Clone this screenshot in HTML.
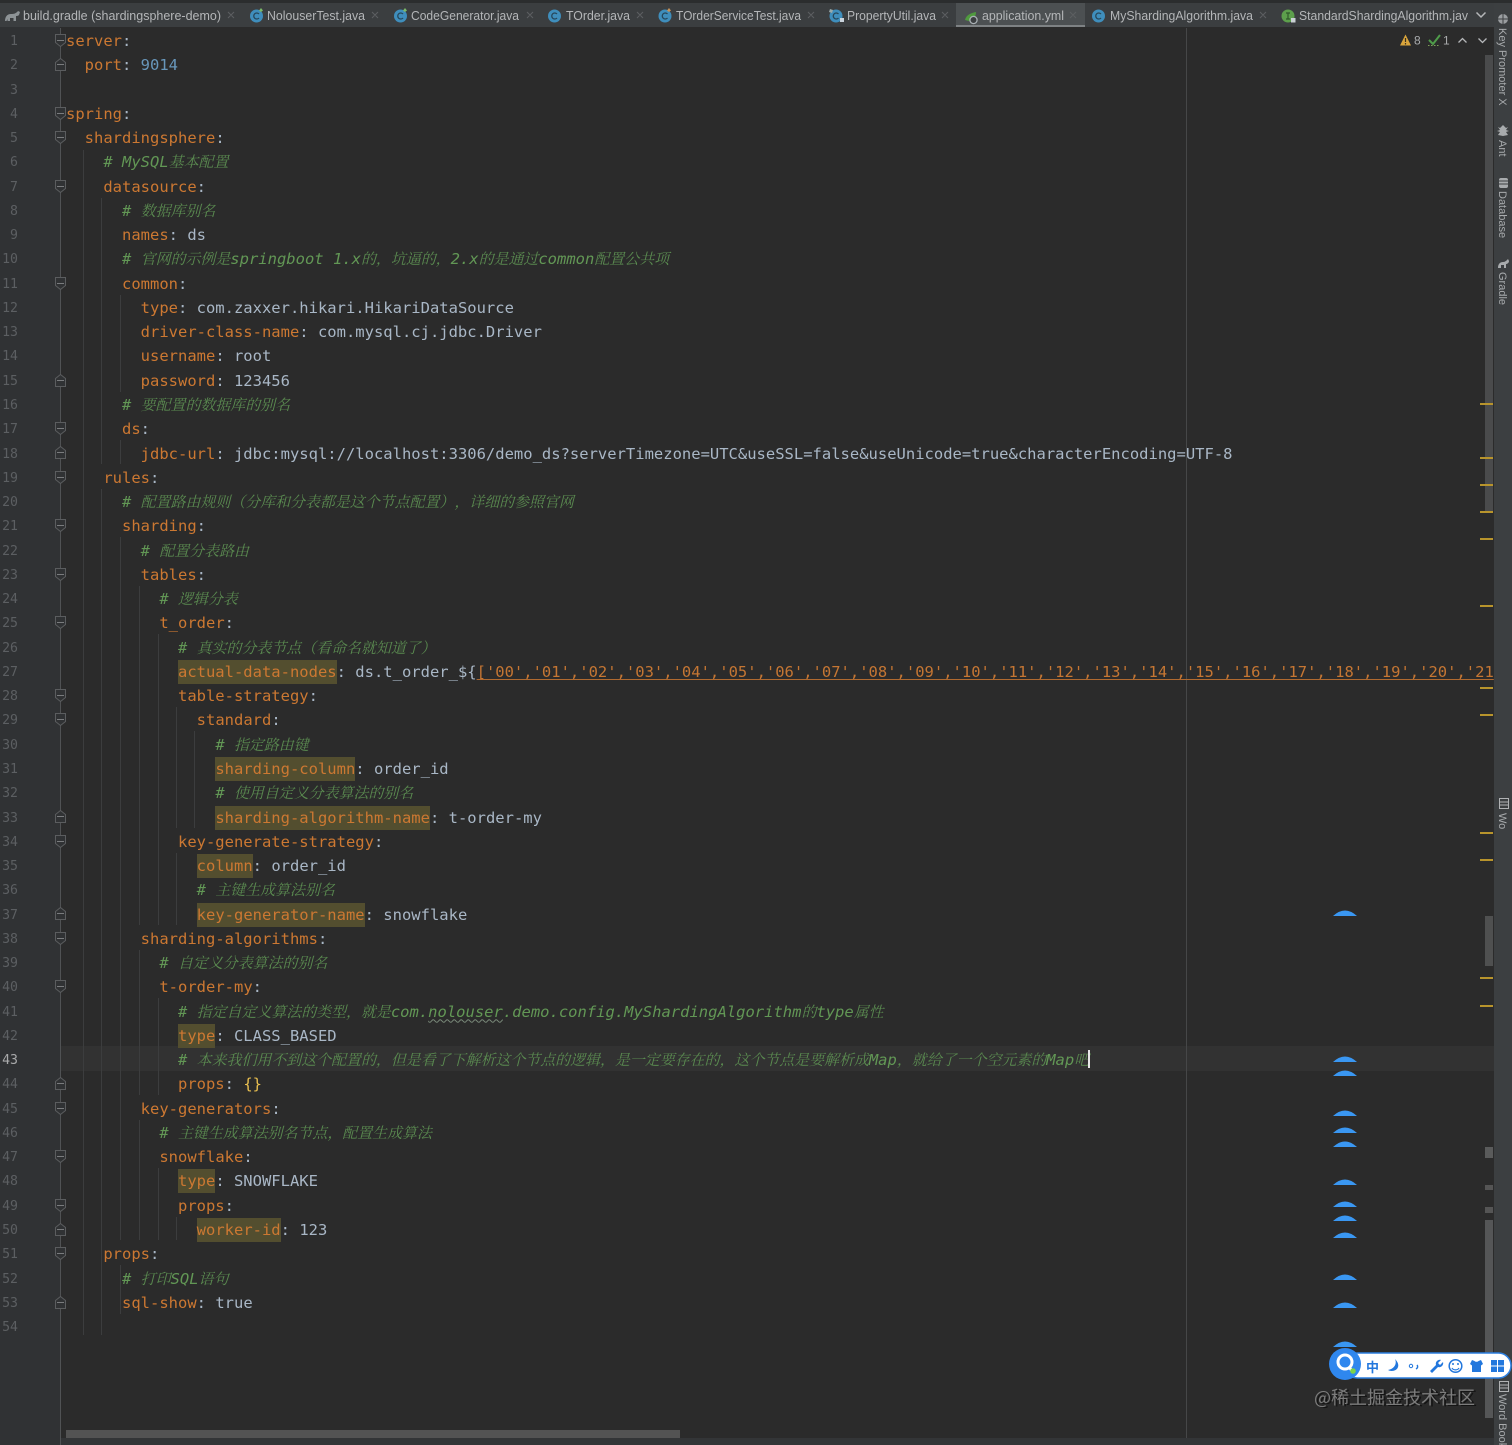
<!DOCTYPE html>
<html lang="zh"><head><meta charset="utf-8"><title>application.yml</title>
<style>
html,body{margin:0;padding:0;background:#2b2b2b;width:1512px;height:1445px;overflow:hidden}
.a{position:absolute}
#code{position:absolute;left:66px;top:29px;width:1428px;height:1400px;overflow:hidden;font:15.5px/24.27px "DejaVu Sans Mono","Liberation Mono","Noto Serif CJK SC",monospace;color:#a9b7c6;text-spacing-trim:space-all}
#code div{height:24.27px;white-space:pre}
#nums{position:absolute;left:0;top:30px;width:18px;text-align:right;font:13.2px/24.27px "DejaVu Sans Mono","Liberation Mono",monospace;color:#5c5f62}
#nums div{height:24.27px}
.k{color:#cc7832}
.h{color:#cc7832;background:#534e2f;display:inline-block;height:24px;line-height:24px;vertical-align:top}
.n{color:#6897bb}
.c{color:#629755;font-style:italic}
.c i{font:italic 14.95px/24px "Noto Serif CJK SC","Noto Sans CJK SC",serif;color:#5a8a50}
.s{color:#c57633;text-decoration:underline;text-decoration-color:#b06a30;text-underline-offset:2px;text-decoration-skip-ink:none}
.w{text-decoration:underline wavy #7a8a7a 1px;text-underline-offset:2px;text-decoration-skip-ink:none}
.y{color:#e8bf50}
.tool{position:absolute;left:1495px;width:13px;writing-mode:vertical-rl;font:11px/13px "Liberation Sans",sans-serif;color:#a8abad;white-space:nowrap;overflow:hidden}
</style></head><body>
<div class="a" style="left:0;top:0;width:1512px;height:3px;background:#2b2d2e"></div>
<div class="a" style="left:0;top:3px;width:1494px;height:24px;background:#3b3e40"></div>
<div class="a" style="left:956px;top:3px;width:129px;height:24px;background:#4c5052"></div>
<div class="a" style="left:956px;top:25px;width:129px;height:2px;background:#7e8284"></div>
<div class="a" style="left:0;top:27px;width:60px;height:1418px;background:#303234"></div>
<div class="a" style="left:60px;top:1046px;width:1434px;height:24.5px;background:#323232"></div>
<div class="a" style="left:60px;top:1438px;width:1434px;height:7px;background:#333537"></div>
<div class="a" style="left:1494px;top:3px;width:18px;height:1442px;background:#3c3f41"></div>
<div class="a" style="left:1485px;top:55px;width:8px;height:457px;background:#4a4b4c"></div>
<div class="a" style="left:1485px;top:916px;width:8px;height:50px;background:#4f5050"></div>
<div class="a" style="left:1485px;top:1147px;width:8px;height:11px;background:#5a5b5b"></div>
<div class="a" style="left:1485px;top:1185px;width:8px;height:5px;background:#555"></div>
<div class="a" style="left:1485px;top:1207px;width:8px;height:6px;background:#555"></div>
<div class="a" style="left:1485px;top:1220px;width:8px;height:198px;background:#555657"></div>
<div class="a" style="left:66px;top:1430px;width:614px;height:8px;background:#535353"></div>

<svg class="a" style="left:0;top:0" width="1512" height="1445" fill="none">
<path d="M60.5 28V1445" stroke="#505254"/>
<path d="M1186.5 28V1438" stroke="#464748"/>
<g stroke="#3c3d3e">
<path d="M83.5 150V1335M101.5 198V464M101.5 489V1265M101.5 1265V1335"/>
<path d="M120.5 295V392M120.5 440V464M120.5 537V1240M120.5 1265V1314"/>
<path d="M139.5 586V925M139.5 950V1095M139.5 1120V1240"/>
<path d="M158.5 634V925M158.5 998V1095M158.5 1168V1240"/>
<path d="M176.5 707V828M176.5 853V925M176.5 1217V1240"/>
<path d="M194.5 731V828"/>
</g>
<g fill="#303234" stroke="#5b5d5f">
<path d="M55.5 34.500h10v8l-5 4l-5-4z"/><path d="M55.5 107.500h10v8l-5 4l-5-4z"/><path d="M55.500 131.500h10v8l-5 4l-5-4z"/><path d="M55.500 180.500h10v8l-5 4l-5-4z"/><path d="M55.500 277.500h10v8l-5 4l-5-4z"/><path d="M55.500 422.500h10v8l-5 4l-5-4z"/><path d="M55.500 471.500h10v8l-5 4l-5-4z"/><path d="M55.500 519.500h10v8l-5 4l-5-4z"/><path d="M55.500 568.500h10v8l-5 4l-5-4z"/><path d="M55.500 616.500h10v8l-5 4l-5-4z"/><path d="M55.500 689.500h10v8l-5 4l-5-4z"/><path d="M55.500 713.500h10v8l-5 4l-5-4z"/><path d="M55.500 835.500h10v8l-5 4l-5-4z"/><path d="M55.500 932.500h10v8l-5 4l-5-4z"/><path d="M55.500 980.500h10v8l-5 4l-5-4z"/><path d="M55.500 1102.500h10v8l-5 4l-5-4z"/><path d="M55.500 1150.500h10v8l-5 4l-5-4z"/><path d="M55.500 1199.500h10v8l-5 4l-5-4z"/><path d="M55.500 1247.500h10v8l-5 4l-5-4z"/>
<path d="M55.500 70.500h10v-8l-5-4l-5 4z"/><path d="M55.500 386.500h10v-8l-5-4l-5 4z"/><path d="M55.500 458.500h10v-8l-5-4l-5 4z"/><path d="M55.500 822.500h10v-8l-5-4l-5 4z"/><path d="M55.500 919.500h10v-8l-5-4l-5 4z"/><path d="M55.500 1089.500h10v-8l-5-4l-5 4z"/><path d="M55.500 1235.500h10v-8l-5-4l-5 4z"/><path d="M55.500 1308.500h10v-8l-5-4l-5 4z"/>
</g>
<g stroke="#7a7c7e">
<path d="M57 40.500h7M57 64.500h7M57 113.500h7M57 137.500h7M57 186.500h7M57 283.500h7M57 380.500h7M57 428.500h7M57 452.500h7M57 477.500h7M57 525.500h7M57 574.500h7M57 622.500h7M57 695.500h7M57 719.500h7M57 816.500h7M57 841.500h7M57 913.500h7M57 938.500h7M57 986.500h7M57 1083.500h7M57 1108.500h7M57 1156.500h7M57 1205.500h7M57 1229.500h7M57 1253.500h7M57 1302.500h7"/>
</g>
</svg>

<div id="nums"><div>1</div><div>2</div><div>3</div><div>4</div><div>5</div><div>6</div><div>7</div><div>8</div><div>9</div><div>10</div><div>11</div><div>12</div><div>13</div><div>14</div><div>15</div><div>16</div><div>17</div><div>18</div><div>19</div><div>20</div><div>21</div><div>22</div><div>23</div><div>24</div><div>25</div><div>26</div><div>27</div><div>28</div><div>29</div><div>30</div><div>31</div><div>32</div><div>33</div><div>34</div><div>35</div><div>36</div><div>37</div><div>38</div><div>39</div><div>40</div><div>41</div><div>42</div><div style="color:#a9aaab">43</div><div>44</div><div>45</div><div>46</div><div>47</div><div>48</div><div>49</div><div>50</div><div>51</div><div>52</div><div>53</div><div>54</div></div>

<div id="code">
<div><span class="k">server</span>:</div>
<div>  <span class="k">port</span>: <span class="n">9014</span></div>
<div> </div>
<div><span class="k">spring</span>:</div>
<div>  <span class="k">shardingsphere</span>:</div>
<div>    <span class="c"># MySQL<i>基本配置</i></span></div>
<div>    <span class="k">datasource</span>:</div>
<div>      <span class="c"># <i>数据库别名</i></span></div>
<div>      <span class="k">names</span>: ds</div>
<div>      <span class="c"># <i>官网的示例是</i>springboot 1.x<i>的，坑逼的，</i>2.x<i>的是通过</i>common<i>配置公共项</i></span></div>
<div>      <span class="k">common</span>:</div>
<div>        <span class="k">type</span>: com.zaxxer.hikari.HikariDataSource</div>
<div>        <span class="k">driver-class-name</span>: com.mysql.cj.jdbc.Driver</div>
<div>        <span class="k">username</span>: root</div>
<div>        <span class="k">password</span>: 123456</div>
<div>      <span class="c"># <i>要配置的数据库的别名</i></span></div>
<div>      <span class="k">ds</span>:</div>
<div>        <span class="k">jdbc-url</span>: jdbc:mysql://localhost:3306/demo_ds?serverTimezone=UTC&amp;useSSL=false&amp;useUnicode=true&amp;characterEncoding=UTF-8</div>
<div>    <span class="k">rules</span>:</div>
<div>      <span class="c"># <i>配置路由规则（分库和分表都是这个节点配置），详细的参照官网</i></span></div>
<div>      <span class="k">sharding</span>:</div>
<div>        <span class="c"># <i>配置分表路由</i></span></div>
<div>        <span class="k">tables</span>:</div>
<div>          <span class="c"># <i>逻辑分表</i></span></div>
<div>          <span class="k">t_order</span>:</div>
<div>            <span class="c"># <i>真实的分表节点（看命名就知道了）</i></span></div>
<div>            <span class="h">actual-data-nodes</span>: ds.t_order_${<span class="s">['00','01','02','03','04','05','06','07','08','09','10','11','12','13','14','15','16','17','18','19','20','21</span></div>
<div>            <span class="k">table-strategy</span>:</div>
<div>              <span class="k">standard</span>:</div>
<div>                <span class="c"># <i>指定路由键</i></span></div>
<div>                <span class="h">sharding-column</span>: order_id</div>
<div>                <span class="c"># <i>使用自定义分表算法的别名</i></span></div>
<div>                <span class="h">sharding-algorithm-name</span>: t-order-my</div>
<div>            <span class="k">key-generate-strategy</span>:</div>
<div>              <span class="h">column</span>: order_id</div>
<div>              <span class="c"># <i>主键生成算法别名</i></span></div>
<div>              <span class="h">key-generator-name</span>: snowflake</div>
<div>        <span class="k">sharding-algorithms</span>:</div>
<div>          <span class="c"># <i>自定义分表算法的别名</i></span></div>
<div>          <span class="k">t-order-my</span>:</div>
<div>            <span class="c"># <i>指定自定义算法的类型，就是</i>com.<span class="w">nolouser</span>.demo.config.MyShardingAlgorithm<i>的</i>type<i>属性</i></span></div>
<div>            <span class="h">type</span>: CLASS_BASED</div>
<div>            <span class="c"># <i>本来我们用不到这个配置的，但是看了下解析这个节点的逻辑，是一定要存在的，这个节点是要解析成</i>Map<i>，就给了一个空元素的</i>Map<i>吧</i></span></div>
<div>            <span class="k">props</span>: <span class="y">{}</span></div>
<div>        <span class="k">key-generators</span>:</div>
<div>          <span class="c"># <i>主键生成算法别名节点，配置生成算法</i></span></div>
<div>          <span class="k">snowflake</span>:</div>
<div>            <span class="h">type</span>: SNOWFLAKE</div>
<div>            <span class="k">props</span>:</div>
<div>              <span class="h">worker-id</span>: 123</div>
<div>    <span class="k">props</span>:</div>
<div>      <span class="c"># <i>打印</i>SQL<i>语句</i></span></div>
<div>      <span class="k">sql-show</span>: true</div>
<div> </div>
</div>
<div class="a" style="left:1088px;top:1050px;width:2px;height:18px;background:#e8e8e8"></div>

<svg class="a" style="left:0;top:0" width="1512" height="1445">
<!-- tab labels -->
<g font-family="'Liberation Sans',sans-serif" font-size="13" fill="#b4b6b8" lengthAdjust="spacingAndGlyphs">
<text x="23" y="20" textLength="198" lengthAdjust="spacingAndGlyphs">build.gradle (shardingsphere-demo)</text>
<text x="267" y="20" textLength="98" lengthAdjust="spacingAndGlyphs">NolouserTest.java</text>
<text x="411" y="20" textLength="108" lengthAdjust="spacingAndGlyphs">CodeGenerator.java</text>
<text x="566" y="20" textLength="64" lengthAdjust="spacingAndGlyphs">TOrder.java</text>
<text x="676" y="20" textLength="125" lengthAdjust="spacingAndGlyphs">TOrderServiceTest.java</text>
<text x="847" y="20" textLength="89" lengthAdjust="spacingAndGlyphs">PropertyUtil.java</text>
<text x="982" y="20" textLength="82" lengthAdjust="spacingAndGlyphs">application.yml</text>
<text x="1110" y="20" textLength="143" lengthAdjust="spacingAndGlyphs">MyShardingAlgorithm.java</text>
<text x="1299" y="20" textLength="169" lengthAdjust="spacingAndGlyphs">StandardShardingAlgorithm.jav</text>
</g>
<!-- tab close -->
<g stroke="#5c5f61" stroke-width="1.1">
<path d="M228 12l6 6m0-6l-6 6M372 12l6 6m0-6l-6 6M527 12l6 6m0-6l-6 6M637 12l6 6m0-6l-6 6M808 12l6 6m0-6l-6 6M942 12l6 6m0-6l-6 6M1070 12l6 6m0-6l-6 6M1260 12l6 6m0-6l-6 6"/>
</g>
<!-- gradle elephant -->
<path d="M5 21c0-4 2-7 6-7c3 0 5-.500 7-3l2 1l-1 3c-1 1-2 1-3 1v5h-2.500v-3h-3.500v3h-2.500v-2l-1 2z" fill="#8d9396"/>
<!-- class icons -->
<g fill="#3f8ebc">
<circle cx="256.500" cy="16" r="6.500"/><circle cx="400.500" cy="16" r="6.500"/><circle cx="554.500" cy="16" r="6.500"/><circle cx="665" cy="16" r="6.500"/><circle cx="836" cy="16" r="6.500"/><circle cx="1098.500" cy="16" r="6.500"/>
</g>
<circle cx="1288" cy="16" r="6.500" fill="#5da04c"/>
<g fill="none" stroke="#26475a" stroke-width="1.300">
<path d="M259 14a3 3 0 1 0 0 4M403 14a3 3 0 1 0 0 4M557 14a3 3 0 1 0 0 4M667.500 14a3 3 0 1 0 0 4M838.500 14a3 3 0 1 0 0 4M1101 14a3 3 0 1 0 0 4"/>
</g>
<path d="M1288 13v6M1286 13h4M1286 19h4" stroke="#2f5a2a" stroke-width="1.200"/>
<path d="M259 10.500l2-2.500 2 2.500-2 1.500zM403 10.500l2-2.500 2 2.500-2 1.500z" fill="#7cb96a"/>
<path d="M667 10.500l2-2.500 2 2.500-2 1.500z" fill="#c4925a"/>
<path d="M830 9l3 1-1 3-3-1z" fill="#9aa"/>
<rect x="840" y="18" width="4" height="4" fill="#c9d3dc"/>
<rect x="1291" y="18" width="4.500" height="4.500" fill="#c9d0d4"/>
<!-- application icon -->
<path d="M965 20c1-5 6-7 11-8c0 3-1 5-3 6l-4 3z" fill="#4f9a3e"/>
<circle cx="973.500" cy="20" r="3.600" fill="#3c3f41" stroke="#a9b0b4" stroke-width="1.300"/>
<!-- tab chevron -->
<path d="M1476.500 12.500l4.500 4.500 4.500-4.500" fill="none" stroke="#b5b7b9" stroke-width="1.500"/>
<!-- inspection widget -->
<path d="M1405.500 34.500l5.500 11h-11z" fill="#d9a53c"/>
<path d="M1405.500 38v4M1405.500 43v1.500" stroke="#3a3020" stroke-width="1.200"/>
<text x="1414" y="44.500" font-family="'Liberation Sans',sans-serif" font-size="12" fill="#a9abad">8</text>
<path d="M1429 40l4 4 7-9" fill="none" stroke="#4f9c4a" stroke-width="2"/>
<path d="M1428 45.500h12" stroke="#7ea05a" stroke-dasharray="1.500 1.500"/>
<text x="1443" y="44.500" font-family="'Liberation Sans',sans-serif" font-size="12" fill="#a9abad">1</text>
<path d="M1458.500 42.500l4-4 4 4M1478.500 38.500l4 4 4-4" fill="none" stroke="#b5b7b9" stroke-width="1.300"/>
<!-- stripes -->
<g fill="#b8942c">
<rect x="1480" y="403" width="13" height="2"/><rect x="1480" y="457" width="13" height="2"/><rect x="1480" y="484" width="13" height="2"/><rect x="1480" y="511" width="13" height="2"/><rect x="1480" y="538" width="13" height="2"/><rect x="1480" y="605" width="13" height="2"/><rect x="1480" y="687" width="13" height="2"/><rect x="1480" y="714" width="13" height="2"/><rect x="1480" y="832" width="13" height="2"/><rect x="1480" y="859" width="13" height="2"/><rect x="1480" y="977" width="13" height="2"/><rect x="1480" y="1005" width="13" height="2"/>
</g>
<!-- blue lenses -->
<g fill="#3a97f2">
<path d="M1333 916q12-11 24 0z"/><path d="M1333 1062q12-11 24 0z"/><path d="M1333 1076q12-11 24 0z"/><path d="M1333 1116q12-11 24 0z"/><path d="M1333 1133q12-11 24 0z"/><path d="M1333 1147q12-11 24 0z"/><path d="M1333 1185q12-11 24 0z"/><path d="M1333 1207q12-11 24 0z"/><path d="M1333 1221q12-11 24 0z"/><path d="M1333 1238q12-11 24 0z"/><path d="M1333 1280q12-11 24 0z"/><path d="M1333 1308q12-11 24 0z"/><path d="M1333 1347q12-11 24 0z"/>
</g>
<!-- tool strip icons -->
<circle cx="1503" cy="19" r="5" fill="#9a9da0"/>
<path d="M1498 19h10M1503 14v10" stroke="#3c3f41"/>
<path d="M1503 125l3 3 2-1-2 3 3 1-3 1 2 3-5 1-5-1 2-3-3-1 3-1-2-3 2 1z" fill="#a8abad"/>
<rect x="1499" y="178" width="9" height="10" rx="2" fill="#a8abad"/>
<path d="M1499 181h9M1499 184h9" stroke="#3c3f41"/>
<path d="M1498 268c0-4 2-6 5-6c2 0 3-1 5-3l1 2c0 2-2 3-3 3v4h-2v-3h-3v3z" fill="#a8abad"/>
<rect x="1499.500" y="798.500" width="9" height="10" fill="none" stroke="#b0b2b4"/>
<path d="M1500 802h8M1500 805h8" stroke="#b0b2b4"/>
<rect x="1499.500" y="1381.500" width="9" height="10" fill="none" stroke="#b0b2b4"/>
<path d="M1500 1385h8M1500 1388h8" stroke="#b0b2b4"/>
<!-- watermark -->
<text x="1315" y="1404" font-family="'Noto Sans CJK SC','Liberation Sans',sans-serif" font-size="18" fill="#000" opacity=".55" transform="translate(1 1)">@稀土掘金技术社区</text>
<text x="1314" y="1404" font-family="'Noto Sans CJK SC','Liberation Sans',sans-serif" font-size="18" fill="#7c7c7c">@稀土掘金技术社区</text>
<!-- IME bar -->
<rect x="1345" y="1353" width="166" height="25" rx="12.500" fill="#fff" stroke="#2c7fdf" stroke-width="1.500"/>
<circle cx="1345" cy="1364" r="16" fill="#2f87ee"/>
<circle cx="1345" cy="1362" r="7" fill="none" stroke="#fff" stroke-width="3"/>
<path d="M1349 1367l4 5" stroke="#fff" stroke-width="3"/>
<circle cx="1353" cy="1371" r="2.800" fill="#7ed348"/>
<text x="1366" y="1372" font-family="'Noto Sans CJK SC',sans-serif" font-size="13" font-weight="700" fill="#2277dd">中</text>
<path d="M1395 1359c2 4 0 10-7 11c3 2 9 1 10-3c1-3-1-6-3-8z" fill="#2277dd"/>
<circle cx="1411" cy="1366" r="1.700" fill="none" stroke="#2277dd"/>
<path d="M1417 1365c1 1 1 3-1 4" fill="none" stroke="#2277dd" stroke-width="1.500"/>
<path d="M1430 1371l6-6c-1-3 2-6 5-5l-3 3 2 2 3-3c1 3-2 6-5 5l-6 6z" fill="#2277dd"/>
<circle cx="1455.500" cy="1366" r="6.300" fill="none" stroke="#2277dd" stroke-width="1.500"/>
<path d="M1452 1368c1.500 2.500 5.500 2.500 7 0" fill="none" stroke="#2277dd" stroke-width="1.200"/>
<circle cx="1453" cy="1364" r="1" fill="#2277dd"/><circle cx="1458" cy="1364" r="1" fill="#2277dd"/>
<path d="M1472 1360l2.500 1c1 1 3 1 4 0l2.500-1 2 4-2 1.500v6.500h-9v-6.500l-2-1.500z" fill="#2277dd"/>
<path d="M1491 1360h6v5.500h-6zM1498 1360h6v5.500h-6zM1491 1366.500h6v5.500h-6zM1498 1366.500h6v5.500h-6z" fill="#2277dd"/>
</svg>

<div class="tool" style="top:28px;height:78px">Key Promoter X</div>
<div class="tool" style="top:140px;height:18px">Ant</div>
<div class="tool" style="top:191px;height:47px">Database</div>
<div class="tool" style="top:272px;height:33px">Gradle</div>
<div class="tool" style="top:813px;height:20px">Wo</div>
<div class="tool" style="top:1394px;height:51px">Word Book</div>
</body></html>
